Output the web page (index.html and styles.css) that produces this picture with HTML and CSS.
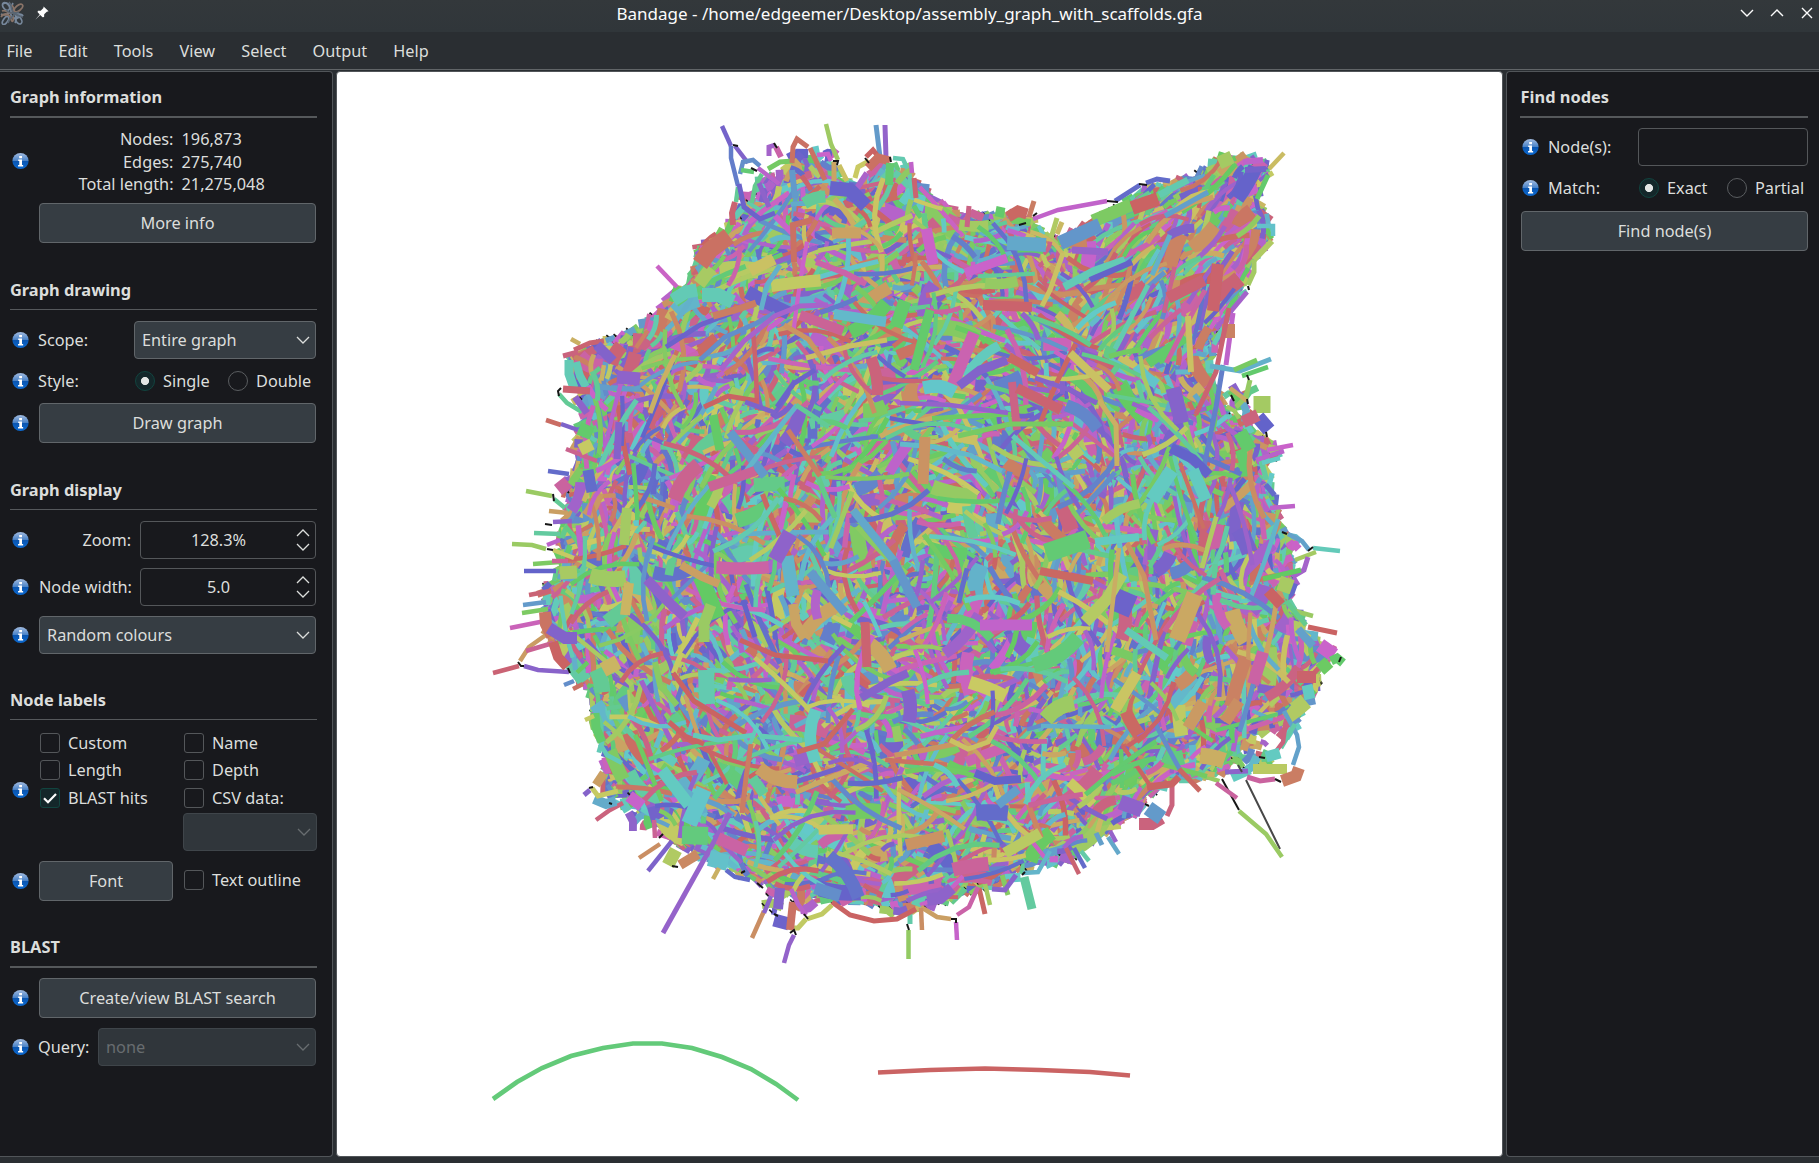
FILE: index.html
```html
<!DOCTYPE html>
<html lang="en">
<head>
<meta charset="utf-8">
<title>Bandage</title>
<link rel="stylesheet" href="styles.css">
</head>
<body>
<svg class="defs" width="0" height="0" aria-hidden="true">
  <defs>
    <linearGradient id="ball" x1="0" y1="0" x2="0" y2="1">
      <stop offset="0" stop-color="#a3bce0"/><stop offset=".48" stop-color="#4a83c8"/>
      <stop offset=".52" stop-color="#0a55b0"/><stop offset="1" stop-color="#0b6ad2"/>
    </linearGradient>
    <symbol id="info" viewBox="0 0 18 18">
      <circle cx="9" cy="9" r="8.6" fill="url(#ball)"/>
      <path d="M7.6 3.6h3v2.5h-3zM6.6 7.4h4v5.8h1.2v1.6H6.4v-1.6h1.3V9H6.6z" fill="#fff"/>
    </symbol>
    <symbol id="down" viewBox="0 0 14 8"><path d="M1 1l6 6 6-6" fill="none" stroke="currentColor" stroke-width="1.3"/></symbol>
    <symbol id="up" viewBox="0 0 14 8"><path d="M1 7l6-6 6 6" fill="none" stroke="currentColor" stroke-width="1.3"/></symbol>
  </defs>
</svg>
<header class="titlebar">
  <div class="title-left">
    <svg class="app-icon" viewBox="0 0 24 24" fill="none" stroke-width="1.7">
      <g stroke="#77889c"><ellipse cx="6" cy="5.500" rx="2.800" ry="4.400" transform="rotate(-40 6 5.500)"/><ellipse cx="18.500" cy="19" rx="2.800" ry="4.400" transform="rotate(-35 18.500 19)"/><ellipse cx="5.500" cy="19.500" rx="2.200" ry="4.500" transform="rotate(35 5.500 19.500)"/><path d="M3 3c5-4 9 4 8 9s6 8 10 2M13 2c-2 4-4 8 1 10s8 0 9 3M1 13c5 3 8-3 12-1s4 6 2 10"/></g>
      <g stroke="#8a7468"><ellipse cx="18.500" cy="7" rx="2.600" ry="5" transform="rotate(50 18.500 7)"/><path d="M1 16c4-6 9-2 10 2s3 3 2-3M2 10c5-2 5 3 9 2s3-5 1-8M1 14h7"/></g>
      <g stroke="#596572"><path d="M9 1c3 3 2 7 4 10s6 4 10 5M6 9c4 4 8 4 13 2M8 22c1-5 4-6 7-9"/></g>
    </svg>
    <svg class="pin" viewBox="0 0 14 14"><path d="M8.600.4 13.600 5.200 11.800 5.700 9.200 8.300 9.100 11 7.600 11.200 5.200 9 .3 13.700 4.700 8.400 2.500 6 3 4.700 5.700 4.700 8.400 2z" fill="#fcfcfc"/></svg>
  </div>
  <h1>Bandage - /home/edgeemer/Desktop/assembly_graph_with_scaffolds.gfa</h1>
  <div class="title-right">
    <svg viewBox="0 0 14 14"><path d="M1 4l6 6 6-6"/></svg>
    <svg viewBox="0 0 14 14"><path d="M1 10l6-6 6 6"/></svg>
    <svg viewBox="0 0 14 14"><path d="M2 2l10 10M12 2L2 12"/></svg>
  </div>
</header>
<nav class="menu"><span>File</span><span>Edit</span><span>Tools</span><span>View</span><span>Select</span><span>Output</span><span>Help</span></nav>
<main class="work">
  <aside class="panel left">
    <section>
      <h2 class="thick">Graph information</h2>
      <div class="row stats-row"><svg class="i"><use href="#info"/></svg>
        <dl class="stats"><dt>Nodes:</dt><dd>196,873</dd><dt>Edges:</dt><dd>275,740</dd><dt>Total length:</dt><dd>21,275,048</dd></dl>
      </div>
      <div class="row btn-row inset"><button>More info</button></div>
    </section>
    <section>
      <h2>Graph drawing</h2>
      <div class="row combo-row"><svg class="i"><use href="#info"/></svg><label>Scope:</label><div class="combo scope"><span>Entire graph</span><svg><use href="#down"/></svg></div></div>
      <div class="row style-row"><svg class="i"><use href="#info"/></svg><label class="style-label">Style:</label><span class="radio on"></span><span class="opt single">Single</span><span class="radio"></span><span class="opt">Double</span></div>
      <div class="row btn-row"><svg class="i"><use href="#info"/></svg><button>Draw graph</button></div>
    </section>
    <section>
      <h2>Graph display</h2>
      <div class="row combo-row"><svg class="i"><use href="#info"/></svg><label class="num">Zoom:</label><div class="spin"><span>128.3%</span><i><svg><use href="#up"/></svg><svg><use href="#down"/></svg></i></div></div>
      <div class="row combo-row gap9"><svg class="i"><use href="#info"/></svg><label class="num">Node width:</label><div class="spin"><span>5.0</span><i><svg><use href="#up"/></svg><svg><use href="#down"/></svg></i></div></div>
      <div class="row combo-row gap10"><svg class="i"><use href="#info"/></svg><div class="combo"><span>Random colours</span><svg><use href="#down"/></svg></div></div>
    </section>
    <section>
      <h2>Node labels</h2>
      <div class="row labels-row"><svg class="i"><use href="#info"/></svg>
        <div class="checks">
          <span class="check"><b></b>Custom</span><span class="check"><b></b>Name</span>
          <span class="check"><b></b>Length</span><span class="check"><b></b>Depth</span>
          <span class="check"><b class="on"><svg viewBox="0 0 18 18"><path d="M3 9.200l4 4 8-8.200" fill="none" stroke="#fcfcfc" stroke-width="2.200"/></svg></b>BLAST hits</span><span class="check"><b></b>CSV data:</span>
          <div class="combo off csv"><span></span><svg><use href="#down"/></svg></div>
        </div>
      </div>
      <div class="row btn-row gap10"><svg class="i"><use href="#info"/></svg><button class="font">Font</button><span class="check outline"><b></b>Text outline</span></div>
    </section>
    <section>
      <h2 class="thick">BLAST</h2>
      <div class="row btn-row gap10"><svg class="i"><use href="#info"/></svg><button>Create/view BLAST search</button></div>
      <div class="row combo-row gap10"><svg class="i"><use href="#info"/></svg><label>Query:</label><div class="combo off query"><span>none</span><svg><use href="#down"/></svg></div></div>
    </section>
  </aside>
  <div class="view"><canvas id="graph" width="1165" height="1084"></canvas></div>
  <aside class="panel right">
    <section>
      <h2 class="thick">Find nodes</h2>
      <div class="row combo-row gap10"><svg class="i"><use href="#info"/></svg><label>Node(s):</label><div class="field"></div></div>
      <div class="row match-row"><svg class="i"><use href="#info"/></svg><label class="match-label">Match:</label><span class="radio on"></span><span class="opt exact">Exact</span><span class="radio"></span><span class="opt">Partial</span></div>
      <div class="row btn-row find"><button>Find node(s)</button></div>
    </section>
  </aside>
</main>
<script src="graph.js"></script>
</body>
</html>
```
FILE: styles.css
```css
* { box-sizing: border-box; }
body { margin: 0; width: 1819px; height: 1163px; overflow: hidden; display: flex; flex-direction: column; background: #2a2e32; color: #dcdedc; font: 16.3px/22px "Noto Sans", sans-serif; }
.defs { position: absolute; }
h1, h2, dl, dd { margin: 0; }
.titlebar { height: 32px; flex: none; display: grid; grid-template-columns: 200px 1fr 200px; background: linear-gradient(#33383b, #30363a); color: #fcfcfc; }
.titlebar h1 { font-size: 17px; font-weight: 400; line-height: 28px; text-align: center; white-space: nowrap; }
.title-left, .title-right { display: flex; height: 26px; align-items: center; }
.app-icon { width: 24px; height: 24px; }
.pin { width: 14px; height: 14px; margin-left: 11px; }
.title-right { justify-content: flex-end; gap: 16px; padding-right: 5px; }
.title-right svg { width: 14px; height: 14px; fill: none; stroke: #fcfcfc; stroke-width: 1.4; }
.menu { height: 38px; flex: none; display: flex; gap: 26.1px; padding-left: 6.4px; line-height: 38px; border-bottom: 1px solid #616568; }
.work { display: grid; grid-template-columns: 333px 1167px 313px; column-gap: 3px; height: 1086px; margin-top: 1px; }
.panel { background: #18191d; border: 1px solid #515559; }
.left { border-left: 0; border-radius: 0 4px 4px 0; padding: 13px 15px 0 10px; }
.right { border-right: 0; border-radius: 4px 0 0 4px; padding: 13px 11px 0 13px; }
.view { border: 1px solid #515559; border-radius: 4px; background: #fff; overflow: hidden; }
.view canvas { display: block; }
h2 { font-size: 16.4px; font-weight: 700; line-height: 24px; height: 32px; border-bottom: 1px solid #55585b; }
h2.thick { height: 33px; border-bottom-width: 2px; }
.right h2 { padding-left: 0.6px; }
section { margin-bottom: 35px; }
section:nth-of-type(3), section:nth-of-type(4) { margin-bottom: 34px; }
.row { display: flex; align-items: center; }
.i { width: 17px; height: 18px; margin: 0 11px 0 2px; flex: none; }
button { flex: 1; height: 40px; padding: 0; font: inherit; color: inherit; background: #363d43; border: 1px solid #61666a; border-radius: 4px; margin-right: 1px; margin-left: -1px; }
.btn-row { height: 40px; }
.stats-row { margin-top: 10px; }
.stats-row .i { position: relative; top: -1px; }
.stats { display: grid; grid-template-columns: 133.5px 1fr; column-gap: 8px; line-height: 22.6px; }
.stats dt { text-align: right; }
.inset { padding-left: 30px; margin-top: 7.2px; }
.combo-row { height: 38px; margin-top: 11px; }
.gap9 { margin-top: 9px; }
.gap10 { margin-top: 10px; }
.combo { flex: 1; height: 38px; display: flex; align-items: center; justify-content: space-between; padding: 0 5px 0 7px; background: #363d43; border: 1px solid #61666a; border-radius: 4px; margin: 0 1px 0 -1px; }
.combo svg, .spin svg { width: 14px; height: 8px; }
.combo.off { background: #30363b; border-color: #3f454a; color: #686d70; }
.combo.scope { flex: none; width: 182px; margin-left: auto; }
.combo.query { flex: none; width: 218px; margin-left: auto; }
.row label { margin-left: -2px; }
.style-row { height: 20px; margin-top: 12px; margin-bottom: 12px; }
.radio { width: 20px; height: 20px; border: 1px solid #5a5d60; border-radius: 50%; margin-right: 8px; flex: none; }
.radio.on { border-color: #11443f; background: radial-gradient(circle, #e4e6e5 0 3.7px, #14272a 4.4px); }
.style-label { width: 97px; }
.single { width: 65px; }
.row label.num { width: 92px; text-align: right; margin: 0 9px 0 -1px; white-space: nowrap; }
.spin, .field { flex: 1; height: 38px; border: 1px solid #54575a; border-radius: 4px; margin-right: 1px; }
.spin { display: flex; align-items: center; padding-right: 5px; }
.spin span { flex: 1; text-align: center; }
.spin i { display: flex; flex-direction: column; gap: 6px; }
.labels-row { margin-top: 13px; align-items: flex-start; }
.labels-row .i { margin-top: 48.500px; }
.checks { display: grid; grid-template-columns: 144px 133px; grid-template-rows: 27.5px 27.5px 25px 38px; }
.check { display: flex; align-items: flex-start; line-height: 21px; white-space: nowrap; }
.check b { width: 20px; height: 20px; border: 1px solid #54575a; border-radius: 3px; margin-right: 8px; }
.check b.on { border-color: #11443f; background: #14272a; }
.check svg { display: block; width: 18px; height: 18px; }
.csv { grid-column: 2; margin: 0 0 0 -1px; }
.font { flex: none; width: 134px; }
.outline { margin-left: 10px; }
.right .field { flex: none; width: 170px; margin: 0 0 0 auto; }
.right label { margin-left: -2px; }
.match-row { height: 20px; margin-top: 12px; }
.match-label { width: 91px; }
.exact { width: 60px; }
.find { margin-top: 13px; }
.find button { margin: 0 0 0 1px; }
```
FILE: graph.js
```js
const ctx = document.getElementById('graph').getContext('2d');
ctx.translate(-337, -72);

let seed = 90210;
function rnd() {
  seed = (seed + 0x6D2B79F5) | 0;
  let t = Math.imul(seed ^ (seed >>> 15), 1 | seed);
  t = (t + Math.imul(t ^ (t >>> 7), 61 | t)) ^ t;
  return ((t ^ (t >>> 14)) >>> 0) / 4294967296;
}
const colour = h => `hsl(${h},49%,59%)`;

const outline = [[735,222],[742,200],[770,205],[778,183],[792,162],[813,163],[830,172],[847,184],[867,187],[875,168],[890,168],[920,187],[933,199],[950,210],[993,219],[1017,212],[1033,223],[1043,235],[1060,241],[1090,224],[1133,199],[1160,185],[1197,176],[1223,158],[1263,160],[1268,173],[1255,200],[1268,223],[1268,243],[1250,262],[1243,287],[1230,310],[1219,335],[1208,367],[1220,400],[1233,420],[1264,437],[1275,453],[1263,467],[1273,503],[1283,530],[1291,567],[1288,600],[1305,630],[1330,653],[1320,673],[1311,697],[1298,713],[1272,727],[1240,740],[1230,763],[1211,780],[1180,777],[1147,793],[1133,817],[1100,833],[1067,857],[1023,867],[1000,885],[967,892],[917,908],[903,903],[847,902],[813,898],[773,888],[727,865],[697,855],[667,835],[643,811],[627,797],[603,787],[607,757],[596,727],[592,690],[575,673],[549,633],[545,593],[562,567],[561,533],[573,500],[564,490],[575,470],[579,427],[592,403],[573,377],[573,357],[603,343],[643,327],[667,301],[693,277],[699,247],[727,231]];
const shape = new Path2D();
outline.forEach(([x, y], i) => i ? shape.lineTo(x, y) : shape.moveTo(x, y));
shape.closePath();
function inside(x, y) {
  let hit = false;
  for (let i = 0, j = outline.length - 1; i < outline.length; j = i++) {
    const [xi, yi] = outline[i], [xj, yj] = outline[j];
    if ((yi > y) !== (yj > y) && x < (xj - xi) * (y - yi) / (yj - yi) + xi) hit = !hit;
  }
  return hit;
}
function line(h, w, pts) {
  ctx.strokeStyle = h < 0 ? '#161616' : colour(h);
  ctx.lineWidth = w;
  ctx.beginPath();
  for (let i = 0; i < pts.length; i += 2) ctx.lineTo(pts[i], pts[i + 1]);
  ctx.stroke();
}
function strand(len, w) {
  const x = 540 + rnd() * 800, y = 150 + rnd() * 770;
  const inEar = x > 1070 && y < 350 + (x - 1070) * .2;
  let a = inEar ? -0.85 + (rnd() - .5) * 1.1 : rnd() < .35
    ? Math.atan2(y - 560, x - 920) + Math.PI / 2 + (rnd() - .5) * .9 : rnd() * Math.PI * 2;
  const bend = (rnd() - .5) * .5, pts = [x, y];
  let px = x, py = y;
  if (!inside(px, py)) return;
  for (let k = 0; k < 4; k++) {
    px += Math.cos(a) * len / 4; py += Math.sin(a) * len / 4; a += bend;
    if (!inside(px, py)) return;
    pts.push(px, py);
  }
  line(rnd() * 360, w, pts);
}
// Short nodes and dark connectors scattered over a loosely packed area
function scatter(x0, y0, x1, y1, n, w) {
  for (let i = 0; i < n; i++) {
    const x = x0 + rnd() * (x1 - x0), y = y0 + rnd() * (y1 - y0), a = rnd() * 6.3, l = 4 + rnd() * 7;
    line(rnd() * 360, w + rnd() * 5, [x - Math.cos(a) * l, y - Math.sin(a) * l, x, y, x + Math.cos(a + .5) * l, y + Math.sin(a + .5) * l]);
    if (rnd() < .25) line(-1, 1.6, [x - l, y, x - l + 3, y + 3]);
  }
}

ctx.fillStyle = colour(280);
ctx.save();
ctx.clip(shape);
for (let y = 145; y < 925; y += 5) for (let x = 535; x < 1345; x += 7) {
  const a = rnd() * 6.3, l = 6 + rnd() * 7;
  line(rnd() * 360, 7, [x - Math.cos(a) * l, y - Math.sin(a) * l, x + Math.cos(a) * l, y + Math.sin(a) * l]);
}
ctx.restore();

// Rough rim
for (let i = 0; i < outline.length; i++) {
  const [x0, y0] = outline[i], [x1, y1] = outline[(i + 1) % outline.length];
  const n = Math.ceil(Math.hypot(x1 - x0, y1 - y0) / 5);
  for (let k = 0; k < n; k++) {
    const t = rnd(), x = x0 + (x1 - x0) * t + (rnd() - .5) * 4, y = y0 + (y1 - y0) * t + (rnd() - .5) * 4;
    const a = Math.atan2(y1 - y0, x1 - x0) + (rnd() - .5) * 1.4, l = 4 + rnd() * 6;
    if (rnd() < .14) line(-1, 1.8, [x - 4, y - 4, x + 1, y, x + 4, y + 4]);
    line(rnd() * 360, 4 + rnd() * rnd() * 7, [x - Math.cos(a) * l, y - Math.sin(a) * l, x + Math.cos(a) * l, y + Math.sin(a) * l]);
  }
}
scatter(748, 178, 790, 205, 16, 4);
scatter(790, 150, 835, 168, 14, 4);
scatter(872, 168, 912, 190, 16, 4);
scatter(574, 362, 596, 400, 9, 4);
scatter(1222, 385, 1250, 425, 14, 4);
scatter(1232, 728, 1268, 766, 26, 4);
scatter(1268, 715, 1292, 730, 10, 4);
scatter(1285, 535, 1296, 600, 12, 4);
scatter(620, 790, 665, 826, 16, 4);
scatter(765, 888, 810, 910, 14, 4);
scatter(885, 900, 935, 912, 14, 4);

for (let i = 0; i < 7000; i++) strand(10 + rnd() * 28, 4 + rnd() * 4);
for (let i = 0; i < 1700; i++) strand(16 + rnd() * 26, 8 + rnd() * 9);
for (let i = 0; i < 4600; i++) strand(14 + rnd() * rnd() * 74, 4 + rnd() * 1.6);
for (let i = 0; i < 300; i++) strand(20 + rnd() * 26, 8 + rnd() * 8);
for (let i = 0; i < 900; i++) strand(30 + rnd() * 60, 4 + rnd() * 1.4);
for (let i = 0; i < 50; i++) strand(28 + rnd() * 26, 9 + rnd() * 7);

// [hue, width, x0, y0, x1, y1, ...] for the strands that stand out
const strands = [
[250,4.5,722,126,731,146],[225,4.5,731,146,731,158,738,186],[257,4.5,735,146,748,163],[215,4.5,740,174,743,162,753,160,760,166],[290,4.5,758,168,779,184],[130,4.5,741,170,754,172],[150,4.5,738,187,736,202],[245,5,739,184,744,207,760,219,775,213],[352,6,735,202,732,213,733,225],[145,4.5,752,203,755,186,762,174],[265,5,759,183,769,207],[110,5,768,169,780,162,793,161],
[85,4.5,826,124,831,144,838,160],[208,5,876,125,880,157],[268,5,885,125,886,158],[278,5,769,156,769,147,775,145],[320,6,776,147,781,157],[8,5,792,163,793,147,797,139,808,147],[8,5,810,148,825,180],[300,4.5,817,155,828,154,831,161],[60,5,855,178,858,167,869,161],[0,5,866,157,873,150,877,155],[8,9,868,168,878,158,890,161],[165,4.5,893,158,903,159,909,172,913,198],[128,8,890,163,889,185],[95,6,897,183,906,173,911,170],[295,4.5,911,162,912,173],[352,5,914,178,916,198],[282,6,867,173,857,188],[55,5,839,165,847,181],[38,5,834,162,834,183],[208,6,792,170,795,198],[242,14,830,188,850,190,866,206],[45,4.5,571,339,580,344],
[303,4.5,657,266,677,287],[80,13,699,284,711,268],[168,13,673,300,686,292,697,290],[168,14,702,295,718,295,733,302],[8,17,700,264,710,250,729,236],[352,5,574,350,590,343,604,341],[168,9,569,360,569,374,574,388],[168,8,576,362,580,376,586,387],[352,7,563,389,590,391],[150,4.5,559,394,567,403,582,412],[5,4.5,546,420,561,425],[255,4.5,561,424,578,430],[335,4.5,566,449,597,461],[235,4.5,548,471,569,474],[88,4.5,526,491,552,496],[265,7,575,397,587,413],[150,4.5,554,499,565,508],[345,5,563,356,578,352],[125,14,583,437,588,425],[62,12,580,450,592,444],[325,13,558,490,568,482],
[340,5,969,206,967,227],[15,5,1034,201,1029,217],[295,4.5,1033,219,1058,210,1107,201],[235,5,1115,201,1140,185],[235,5,1146,183,1157,179,1170,181],[52,4.5,1269,169,1284,153],[125,5,1268,175,1257,199],[75,5,1057,218,1051,238],[50,5,1062,222,1057,234],[125,9,999,217,1001,207],[3,11,1008,217,1018,211,1027,214],[105,13,1093,221,1131,205],[210,14,1060,243,1100,225],[0,14,1132,208,1158,199],[165,7,1159,195,1188,180],[205,5,1165,216,1208,192],[82,13,1219,163,1232,157],[293,6,1243,162,1263,160],[250,6,1245,170,1266,169],[185,4.5,1257,226,1273,226,1273,236],[75,6,1272,241,1254,260],[82,5,1254,260,1254,272,1248,285],[165,5,1240,295,1247,291],[278,5,1216,329,1247,292],[293,5,1233,313,1226,365],[18,14,1222,331,1235,331],[352,5,1229,308,1216,372,1196,414],[224,5,1223,365,1216,407,1204,467],[195,5,1210,366,1240,371,1271,359],[108,5,1234,370,1257,360],[125,4.5,1242,376,1268,367],[90,5,1250,380,1246,397,1236,407],[42,4.5,1230,388,1247,401],[82,17,1262,396,1262,413],[240,14,1258,417,1269,430],[345,12,1243,422,1258,415],[125,14,1240,432,1250,450],[300,4.5,1267,450,1293,445],[290,4.5,1256,460,1284,451],[178,4.5,1262,463,1280,458],[293,4.5,1270,508,1295,506],
[170,4.5,1313,548,1340,551],[204,4.5,1288,534,1302,541,1309,550],[82,4.5,1295,560,1316,552],[278,5,1308,557,1304,570,1292,577],[120,5,1263,579,1301,570],[80,14,1283,592,1288,578],[0,11,1268,591,1281,605],[88,4.5,1288,609,1313,616],[145,5,1286,601,1306,625],[0,5,1308,627,1337,633],[300,14,1320,645,1334,655],[115,13,1320,670,1329,662],[125,9,1331,661,1337,658,1343,663],[355,12,1297,677,1316,677],[204,8,1298,629,1313,646],[175,11,1307,685,1310,699],[204,4.5,1284,711,1297,735,1299,747,1293,765],[160,4.5,1295,724,1281,748],[345,4.5,1285,728,1283,742,1277,750],[175,11,1266,757,1280,753],[70,10,1253,769,1287,769],[15,12,1282,781,1296,776,1299,768],[175,9,1232,778,1250,770],[325,5,1247,777,1260,781,1275,779],[265,5,1225,772,1248,771],[3,5,1179,769,1200,791],[345,5,1172,783,1172,805,1167,816],[0,7,1147,787,1172,784,1179,777],[345,12,1139,824,1152,824,1162,818],[208,15,1148,808,1162,818],[265,15,1120,802,1142,810],[200,4.5,1108,837,1119,854],[270,4.5,1110,831,1116,842],[352,4.5,1066,848,1079,874],[235,4.5,1074,848,1085,868],[160,4.5,1081,851,1089,861],[205,5,1096,833,1102,845],[192,4.5,1023,873,1038,872,1050,851],[155,9,1024,877,1032,909],[3,5,979,888,985,914],[82,4.5,985,884,990,905],[100,5,1002,875,1008,895],[262,5,992,889,1005,890,1016,875],[320,4.5,957,915,969,907,978,887],[298,4.5,956,922,957,940],[35,4.5,921,907,937,917,951,919],[25,4.5,921,908,922,930],[92,4.5,908.5,930,908.5,959],[160,5,910,911,910,924],[265,12,927,900,940,898,952,888],[0,5,832,902,850,915,874,921,897,919,916,909],[65,5,807,919,822,914,832,905],[65,5,790,928,798,928,806,919],[268,4.5,794,935,789,945,784,963],[25,4.5,764,911,752,938],[262,4.5,771,896,764,913],[245,13,774,920,789,924],[8,8,793,902,790,930],[258,10,780,888,778,909],[290,4.5,791,889,798,904,806,915],[215,12,815,888,840,896],
[269,5,730,813,663,933],[255,4.5,672,841,648,871],[25,4.5,660,844,639,858],[330,4.5,654,820,655,838],[345,4.5,623,803,610,810,596,820],[198,10,594,799,606,804,616,801],[260,5,584,795,590,790],[62,5,592,788,598,796,618,791],[35,9,596,785,604,773],[298,12,629,796,642,806],[75,13,668,865,676,850],[22,10,680,865,698,854],[185,16,709,858,728,863],[235,4.5,726,870,735,877,750,880],[45,4.5,713,879,719,868],
[35,4.5,549,511,568,513],[265,4.5,553,522,572,521],[155,4.5,534,533,560,534],[88,4.5,512,544,532,545,546,549],[292,4.5,547,545,560,540],[62,4.5,553,550,574,558],[105,4.5,533,564,560,562],[330,4.5,552,561,568,561],[240,4.5,524,571,556,571],[80,13,560,573,577,572],[350,4.5,529,595,550,591],[208,4.5,523,605,546,602],[105,4.5,522,613,548,609],[310,4.5,510,628,545,621],[33,4.5,520,661,529,647,550,632],[332,4.5,526,651,553,643],[350,4.5,493,673,508,669,519,666],[262,4.5,524,666,538,670,569,672],[10,12,545,612,546,624,552,636],[0,10,553,642,558,657,567,667],[258,12,549,628,565,638,577,638],[215,4.5,564,685,574,681],[8,4.5,573,689,583,684],[125,9,595,713,596,728,602,742],[62,4.5,585,720,594,716],[170,4.5,600,744,607,755,622,763],
[245,5,666,347,700,325,732,313],[15,7,713,316,735,310,756,303],[215,5,700,360,725,337,757,323,775,313],[280,5,721,370,744,341,775,316,800,306,828,305],[330,10,800,315,843,331],[190,10,834,314,886,322],[125,13,896,327,905,301],[55,5,806,358,850,346,887,340],[30,5,784,325,808,339,825,363],[320,6,816,262,845,273,866,284],[55,12,750,271,774,259],[300,6,775,216,792,233],[37,11,832,233,861,233],[8,6,794,262,793,225,812,220],[195,5,761,310,767,285,780,265],[208,9,730,432,765,476],[192,5,737,483,775,433,797,405],[0,5,704,407,728,396,758,401],[255,5,745,402,776,413],[245,5,777,407,793,384,815,370],[150,5,796,405,829,427],[15,5,788,430,820,476],[122,9,713,415,720,450],[45,5,650,413,660,386,675,355],[260,7,619,422,617,459],[265,13,617,377,640,379],[258,10,597,345,613,361],[235,11,588,470,592,492],[330,10,709,487,755,471],[82,10,627,508,624,545],[35,8,681,565,702,577,719,584],[192,13,787,556,793,596],[265,15,790,533,775,560],[208,9,810,572,845,613],[200,8,853,510,895,562],[210,9,893,560,917,607],[38,10,793,604,796,624,805,638],[88,11,711,605,704,624,704,642],[48,10,629,583,625,615],[165,16,706,670,707,704],[48,15,603,670,618,662],[98,6,655,662,660,685,677,705],[0,5,673,673,694,701,746,733],[0,5,669,722,685,736,704,744],[170,5,693,735,718,740,755,735],[168,5,760,736,802,740],[260,8,861,698,890,681,908,673],[3,5,797,752,824,744,853,709],[240,5,743,600,755,637],[0,5,740,640,775,655,828,661],[352,9,865,622,867,667],[15,5,742,813,746,778,751,744],[175,12,662,770,689,805],[182,16,704,789,689,824],[135,18,682,835,708,836],[322,12,718,838,747,851],[240,8,975,773,995,781,1021,779],[205,9,998,805,1018,789],[70,11,1005,853,1040,833],[28,12,906,845,944,836],[57,11,1115,710,1137,673],[40,17,1177,640,1195,594],[245,23,1118,613,1127,592],[72,12,1085,622,1107,599,1122,574],[130,19,1046,553,1088,539],[175,8,1095,542,1139,537],[3,8,1040,571,1093,581],[295,11,980,625,1032,625],[168,7,1126,630,1167,658],[28,5,1127,543,1144,576,1156,640],[43,4.5,1119,548,1107,652],[195,4.5,1041,726,1111,727],[32,12,1188,728,1203,702],[25,12,1225,722,1239,701],[322,12,1253,684,1263,652],[55,5,950,740,968,749,988,742,997,726],[125,9,914,370,930,310],[315,12,953,384,974,333],[355,10,983,305,1032,307],[300,9,965,273,1007,258],[200,14,1007,243,1046,245],[270,7,1072,250,1108,252],[55,5,1063,253,1050,290,1042,306],[168,8,1064,287,1094,271,1125,260],[240,6,1090,280,1132,262],[165,5,1115,349,1148,285],[195,5,1152,275,1170,235],[55,8,1070,353,1109,390],[258,9,959,386,980,370,1007,360],[3,9,1009,357,1038,373],[190,5,900,444,934,447,970,455,1002,471],[45,5,1099,400,1116,425,1117,466],[260,5,1035,378,1070,390,1097,403],[340,8,1012,382,1017,430],[352,10,1017,388,1061,410],[350,12,1168,298,1204,280],[240,10,1171,448,1193,459,1209,475],[175,14,1152,500,1172,470],[175,12,1193,470,1206,500],[260,15,1173,388,1182,423],[28,11,923,484,925,437],[268,4.5,900,403,950,405,1008,413],[55,6,1188,316,1191,372],[355,12,1213,311,1218,264],[108,5,958,436,1010,424,1073,424]
];
strands.forEach(([h, w, ...pts]) => line(h, w, pts));

const joints = [[733,145,738,146],[774,143,777,148],[751,168,757,171],[833,161,838,161,837,165],[865,158,869,163],[890,157,891,162],[561,388,558,391,559,396],[553,494,554,501],[518,662,521,666,524,666],[568,668,570,673],[545,524,552,525],[547,549,553,550],[1107,201,1118,202],[1139,184,1147,185],[1019,225,1026,223],[1033,216,1037,213],[1247,375,1249,380],[1231,395,1234,401],[1247,399,1248,404],[1266,432,1267,437],[1248,286,1249,290],[1308,551,1313,547],[1282,532,1287,534],[1341,657,1339,662],[1259,757,1265,758],[1275,779,1281,782],[1145,804,1149,806],[907,924,909,930],[951,919,956,919,956,923],[790,933,794,930,796,935],[804,914,808,919],[774,914,778,916],[672,866,678,867],[659,838,663,834],[757,883,763,888],[1022,875,1025,872],[741,873,745,871],[589,788,593,787],[609,803,612,804]];
joints.forEach(p => line(-1, 2, p));
line(-1, 2, [1222, 779, 1239, 810]);
ctx.strokeStyle = '#484848';
ctx.beginPath();
ctx.moveTo(1246, 780); ctx.lineTo(1280, 849);
ctx.moveTo(1238, 765); ctx.lineTo(1242, 772);
ctx.stroke();
line(88, 4.5, [1239, 811, 1266, 834, 1282, 857]);
line(325, 4.5, [1216, 783, 1237, 798]);

// Detached contigs below the main component
line(133, 4.6, [493, 1099, 517, 1082, 542, 1068, 571, 1056, 603, 1048, 633, 1043.5, 662, 1043.5, 692, 1048, 722, 1057, 751, 1069, 776, 1084, 798, 1100]);
line(0, 4.6, [878, 1072.5, 930, 1070, 985, 1068.5, 1040, 1070, 1090, 1072, 1130, 1075.5]);
```
